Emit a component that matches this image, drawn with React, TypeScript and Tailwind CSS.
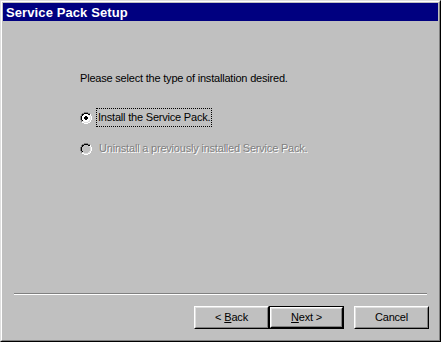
import React from "react";

const font = { fontFamily: '"Liberation Sans", Arial, sans-serif' };

const RADIO = [
  "....GGGG....",
  "..GGKKKKGG..",
  ".GKKFFFFKKW.",
  ".GKFFFFFFLW.",
  "GKFFFFFFFFLW",
  "GKFFFFFFFFLW",
  "GKFFFFFFFFLW",
  "GKFFFFFFFFLW",
  ".GKFFFFFFLW.",
  ".GLLFFFFLLW.",
  "..WWLLLLWW..",
  "....WWWW....",
];
const DOT = ["....", ".XX.", "XXXX", "XXXX", ".XX."];

function Radio({ checked, disabled }: { checked?: boolean; disabled?: boolean }) {
  const colors: Record<string, string> = {
    G: "#808080",
    K: "#000000",
    W: "#ffffff",
    L: "#dfdfdf",
    F: disabled ? "#c0c0c0" : "#ffffff",
  };
  const rects: React.ReactNode[] = [];
  RADIO.forEach((row, y) =>
    row.split("").forEach((c, x) => {
      if (c !== ".") rects.push(<rect key={`${x}-${y}`} x={x} y={y} width={1} height={1} fill={colors[c]} />);
    })
  );
  if (checked) {
    const dot: [number, number][] = [
      [5, 4], [6, 4],
      [4, 5], [5, 5], [6, 5], [7, 5],
      [4, 6], [5, 6], [6, 6], [7, 6],
      [5, 7], [6, 7],
    ];
    dot.forEach(([x, y]) => rects.push(<rect key={`d${x}-${y}`} x={x} y={y} width={1} height={1} fill="#000" />));
  }
  void DOT;
  return (
    <svg width="12" height="12" viewBox="0 0 12 12" className="shrink-0" shapeRendering="crispEdges">
      {rects}
    </svg>
  );
}

function Button({ children, isDefault }: { children: React.ReactNode; isDefault?: boolean }) {
  const inner = (
    <div className="flex-1 border border-t-white border-l-white border-r-black border-b-black">
      <div className="w-full h-full border border-t-[#dfdfdf] border-l-[#dfdfdf] border-r-[#808080] border-b-[#808080] flex items-center justify-center text-[11px] tracking-[-0.2px] text-black">
        {children}
      </div>
    </div>
  );
  return isDefault ? (
    <div className="w-[75px] h-[23px] border border-black flex">{inner}</div>
  ) : (
    <div className="w-[75px] h-[23px] flex">{inner}</div>
  );
}

export default function App() {
  return (
    <div style={font} className="w-[441px] h-[342px] border border-t-[#dfdfdf] border-l-[#dfdfdf] border-r-black border-b-black bg-[#c0c0c0]">
      <div className="w-full h-full border border-t-white border-l-white border-r-[#808080] border-b-[#808080] p-px flex flex-col">
        <div className="h-[18px] bg-[#000080] flex items-center pl-[3px] text-white font-bold text-[13px] tracking-[0.1px] leading-none">
          Service Pack Setup
        </div>
        <div className="flex-1 flex flex-col">
          <div className="pl-[77px] pt-[51px] text-[11px] leading-[13px] tracking-[-0.2px] text-black">
            Please select the type of installation desired.
          </div>
          <div className="pl-[77px] pt-[23px] flex items-center text-[11px] leading-[13px] tracking-[-0.2px]">
            <Radio checked />
            <div className="ml-[4px] border border-dotted border-black px-[1px] py-[2px] text-black">
              Install the Service Pack.
            </div>
          </div>
          <div className="pl-[77px] pt-[15px] flex items-center text-[11px] leading-[13px] tracking-[-0.2px]">
            <Radio disabled />
            <div className="ml-[5px] px-[2px] text-[#808080] [text-shadow:1px_1px_0_#ffffff]">
              Uninstall a previously installed Service Pack.
            </div>
          </div>
          <div className="flex-1" />
          <div className="mx-[11px] h-[2px] border-t border-t-[#808080] border-b border-b-white" />
          <div className="flex justify-end pr-[9px] pt-[11px] pb-[10px]">
            <Button>
              &lt; <span className="underline ml-[3px]">B</span>ack
            </Button>
            <Button isDefault>
              <span className="underline">N</span>ext &gt;
            </Button>
            <div className="w-[10px]" />
            <Button>Cancel</Button>
          </div>
        </div>
      </div>
    </div>
  );
}
